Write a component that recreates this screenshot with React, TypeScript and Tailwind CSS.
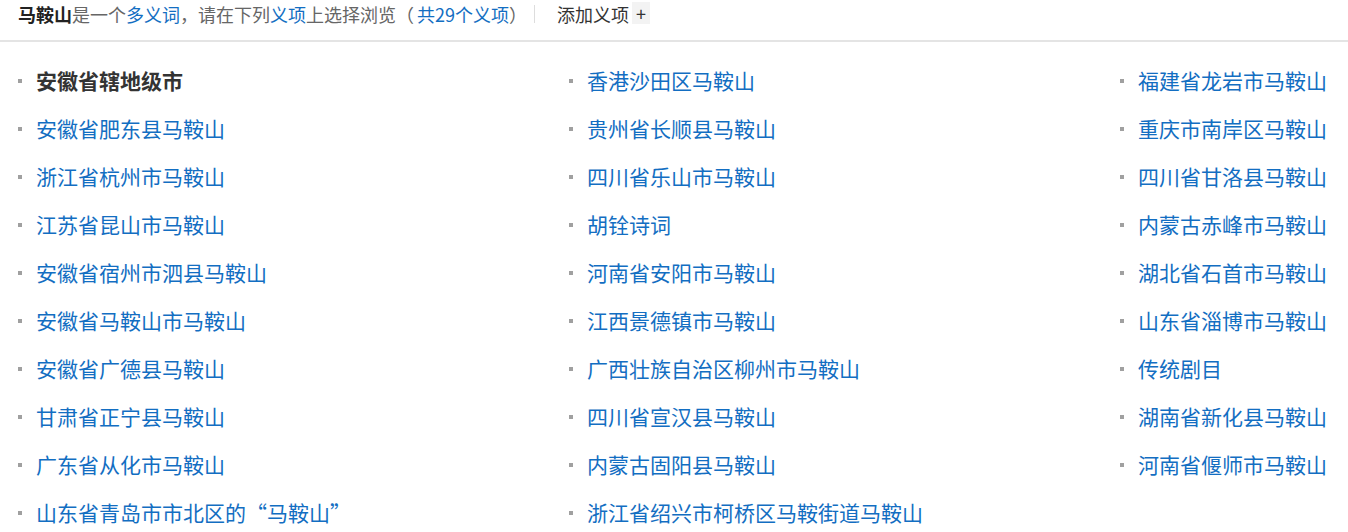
const COLUMNS: { text: string; current?: boolean }[][] = [
  [
    { text: "安徽省辖地级市", current: true },
    { text: "安徽省肥东县马鞍山" },
    { text: "浙江省杭州市马鞍山" },
    { text: "江苏省昆山市马鞍山" },
    { text: "安徽省宿州市泗县马鞍山" },
    { text: "安徽省马鞍山市马鞍山" },
    { text: "安徽省广德县马鞍山" },
    { text: "甘肃省正宁县马鞍山" },
    { text: "广东省从化市马鞍山" },
    { text: "山东省青岛市市北区的“马鞍山”" },
  ],
  [
    { text: "香港沙田区马鞍山" },
    { text: "贵州省长顺县马鞍山" },
    { text: "四川省乐山市马鞍山" },
    { text: "胡铨诗词" },
    { text: "河南省安阳市马鞍山" },
    { text: "江西景德镇市马鞍山" },
    { text: "广西壮族自治区柳州市马鞍山" },
    { text: "四川省宣汉县马鞍山" },
    { text: "内蒙古固阳县马鞍山" },
    { text: "浙江省绍兴市柯桥区马鞍街道马鞍山" },
  ],
  [
    { text: "福建省龙岩市马鞍山" },
    { text: "重庆市南岸区马鞍山" },
    { text: "四川省甘洛县马鞍山" },
    { text: "内蒙古赤峰市马鞍山" },
    { text: "湖北省石首市马鞍山" },
    { text: "山东省淄博市马鞍山" },
    { text: "传统剧目" },
    { text: "湖南省新化县马鞍山" },
    { text: "河南省偃师市马鞍山" },
  ],
];

function Item({ text, current }: { text: string; current?: boolean }) {
  return (
    <li className="flex h-[48px] items-center">
      <span className="ml-[18px] mr-[14px] h-[4px] w-[4px] shrink-0 bg-[#a0a0a0]" />
      {current ? (
        <span className="font-bold text-[#333]">{text}</span>
      ) : (
        <a className="cursor-pointer whitespace-nowrap text-[#136ec2] hover:underline">{text}</a>
      )}
    </li>
  );
}

export default function App() {
  return (
    <div
      className="min-h-[532px] w-[1348px] bg-white"
      style={{ fontFamily: '"Microsoft YaHei", "Noto Sans CJK SC", "Noto Sans", sans-serif' }}
    >
      {/* Header: polysemant summary */}
      <div className="flex h-[40px] items-start pl-[18px] pt-[2px] text-[18px] leading-[24px] text-[#666]">
        <span className="font-bold text-[#222]">马鞍山</span>
        <span>是一个</span>
        <a className="text-[#136ec2]">多义词</a>
        <span>，请在下列</span>
        <a className="text-[#136ec2]">义项</a>
        <span>上选择浏览（</span>
        <a className="ml-[3px] text-[#136ec2]">共29个义项</a>
        <span>）</span>
        <span className="ml-[7px] mr-[22px] mt-[3px] h-[18px] w-px bg-[#ddd]" />
        <span className="text-[#333]">添加义项</span>
        <span className="ml-[3px] flex h-[22px] w-[18px] items-center justify-center bg-[#f3f3f3] text-[18px] leading-none text-[#333]">
          +
        </span>
      </div>
      <div className="h-[2px] bg-[#e4e4e4]" />

      {/* Sense list */}
      <div className="grid grid-cols-[551px_551px_1fr] pt-[15px] text-[21px]">
        {COLUMNS.map((col, i) => (
          <ul key={i}>
            {col.map((item) => (
              <Item key={item.text} {...item} />
            ))}
          </ul>
        ))}
      </div>
    </div>
  );
}
